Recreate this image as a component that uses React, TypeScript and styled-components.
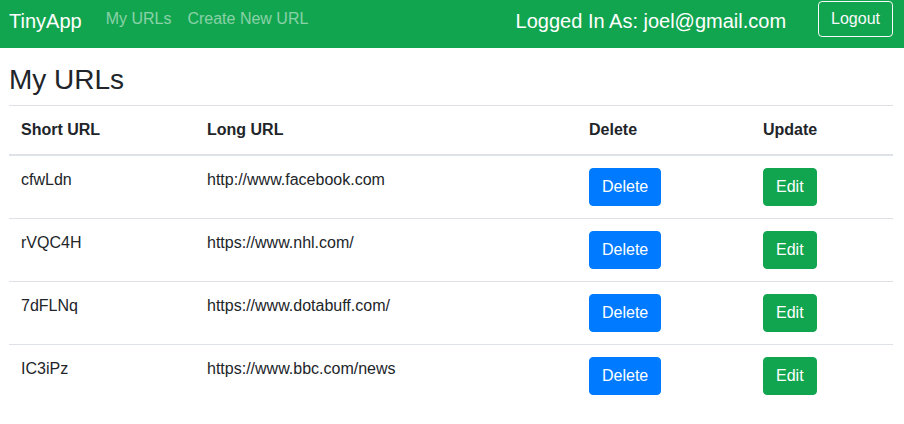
import React from "react";
import styled, { createGlobalStyle } from "styled-components";

const GlobalStyle = createGlobalStyle`
  html, body { margin: 0; padding: 0; background: #fff; }
  body {
    font-family: "Liberation Sans", Arial, sans-serif;
    font-size: 16px;
    line-height: 1.5;
    color: #212529;
  }
  * { box-sizing: border-box; }
`;

const GREEN = "#12a550";

const NavBar = styled.nav`
  display: flex;
  align-items: flex-start;
  height: 48px;
  padding: 0 11px 0 9px;
  background: ${GREEN};
`;

const Brand = styled.a`
  font-size: 20px;
  line-height: 30px;
  margin-top: 6px;
  margin-right: 16px;
  color: #fff;
  text-decoration: none;
`;

const NavLinks = styled.div`
  display: flex;
`;

const NavLink = styled.a`
  font-size: 16px;
  line-height: 24px;
  padding: 7px 8px;
  color: rgba(255, 255, 255, 0.5);
  text-decoration: none;
`;

const Spacer = styled.div`
  flex: 1;
`;

const LoggedIn = styled.span`
  font-size: 20px;
  line-height: 30px;
  margin-top: 6px;
  margin-right: 32px;
  color: #fff;
`;

const OutlineButton = styled.button`
  margin-top: 1px;
  height: 36px;
  padding: 5px 12px;
  font-family: inherit;
  font-size: 16px;
  line-height: 24px;
  color: #f8f9fa;
  background: transparent;
  border: 1px solid #f8f9fa;
  border-radius: 4px;
`;

const Main = styled.main`
  padding: 0 11px 0 9px;
`;

const Title = styled.h3`
  margin: 15px 0 8px;
  font-size: 28px;
  font-weight: 500;
  line-height: 1.2;
  color: #212529;
`;

const Table = styled.table`
  width: 100%;
  border-collapse: collapse;
  table-layout: fixed;
`;

const Th = styled.th<{ $w: number }>`
  width: ${(p) => p.$w}px;
  text-align: left;
  font-weight: bold;
  padding: 12px;
  line-height: 24px;
  vertical-align: bottom;
  border-top: 1px solid #dee2e6;
  border-bottom: 2px solid #dee2e6;
`;

const Td = styled.td`
  padding: 12px;
  line-height: 24px;
  vertical-align: top;
  border-top: 1px solid #dee2e6;
`;

const Row = styled.tr`
  &:first-child td { border-top: none; }
`;

const Btn = styled.button<{ $variant: "primary" | "success" }>`
  display: inline-block;
  padding: 6px 12px;
  font-family: inherit;
  font-size: 16px;
  line-height: 24px;
  color: #fff;
  background: ${(p) => (p.$variant === "primary" ? "#007bff" : GREEN)};
  border: 1px solid ${(p) => (p.$variant === "primary" ? "#007bff" : GREEN)};
  border-radius: 4px;
`;

const urls = [
  { short: "cfwLdn", long: "http://www.facebook.com" },
  { short: "rVQC4H", long: "https://www.nhl.com/" },
  { short: "7dFLNq", long: "https://www.dotabuff.com/" },
  { short: "IC3iPz", long: "https://www.bbc.com/news" },
];

export default function App() {
  return (
    <>
      <GlobalStyle />
      <NavBar>
        <Brand href="#">TinyApp</Brand>
        <NavLinks>
          <NavLink href="#">My URLs</NavLink>
          <NavLink href="#">Create New URL</NavLink>
        </NavLinks>
        <Spacer />
        <LoggedIn>Logged In As: joel@gmail.com</LoggedIn>
        <OutlineButton>Logout</OutlineButton>
      </NavBar>
      <Main>
        <Title>My URLs</Title>
        <Table>
          <thead>
            <tr>
              <Th $w={186}>Short URL</Th>
              <Th $w={382}>Long URL</Th>
              <Th $w={174}>Delete</Th>
              <Th $w={142}>Update</Th>
            </tr>
          </thead>
          <tbody>
            {urls.map((u) => (
              <Row key={u.short}>
                <Td>{u.short}</Td>
                <Td>{u.long}</Td>
                <Td>
                  <Btn $variant="primary">Delete</Btn>
                </Td>
                <Td>
                  <Btn $variant="success">Edit</Btn>
                </Td>
              </Row>
            ))}
          </tbody>
        </Table>
      </Main>
    </>
  );
}
